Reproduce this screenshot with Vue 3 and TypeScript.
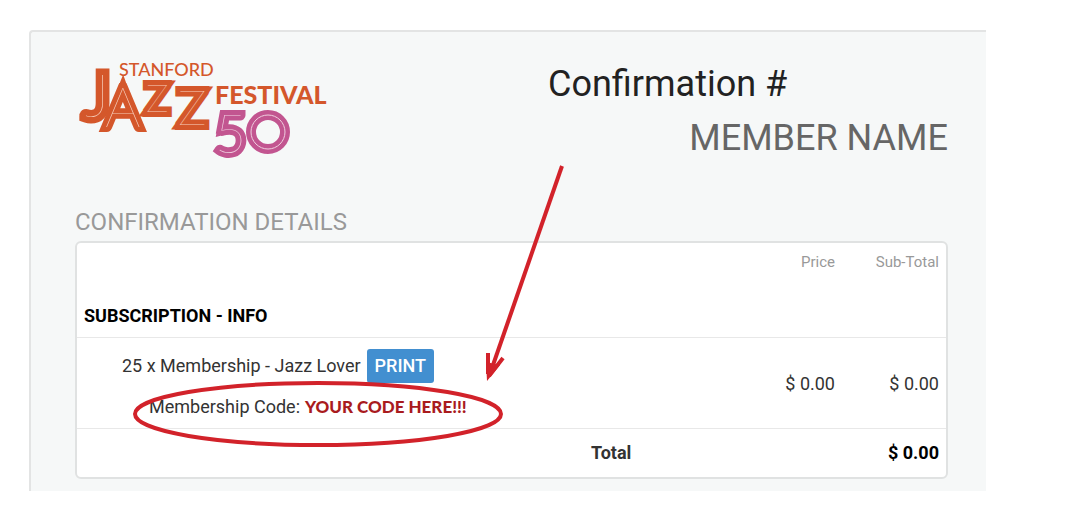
<script setup lang="ts">
interface LineItem {
  quantity: number
  name: string
  code: string
  price: number
}

const items: LineItem[] = [
  { quantity: 25, name: 'Membership - Jazz Lover', code: 'YOUR CODE HERE!!!', price: 0 },
]

const money = (value: number): string => `$ ${value.toFixed(2)}`
const total = items.reduce((sum, item) => sum + item.price, 0)

const printPage = (): void => window.print()
</script>

<template>
  <main class="page">
    <article class="sheet">
      <header class="top">
        <svg class="logo" viewBox="0 0 256 104" role="img" aria-label="Stanford Jazz Festival 50">
          <text class="jazz">
            <tspan class="initial" x="10" y="57">J</tspan>
            <tspan x="30" y="67" font-size="56">A</tspan>
            <tspan x="71" y="52" font-size="38">Z</tspan>
            <tspan x="103" y="65" font-size="48">Z</tspan>
          </text>
          <text class="five" x="140" y="93">5</text>
          <circle class="ring" cx="193" cy="72" r="17" />
          <circle class="ring-line" cx="193" cy="72" r="17" />
          <text class="stanford" x="44" y="16">STANFORD</text>
          <text class="festival" x="140" y="44">FESTIVAL</text>
        </svg>
        <div class="who">
          <h1 class="number">Confirmation #</h1>
          <p class="member">MEMBER NAME</p>
        </div>
      </header>

      <h2 class="heading">CONFIRMATION DETAILS</h2>
      <div class="panel">
        <table class="details">
          <colgroup>
            <col class="col-item" />
            <col />
            <col class="col-price" />
            <col class="col-subtotal" />
          </colgroup>
          <thead>
            <tr class="labels">
              <th></th>
              <th></th>
              <th class="amount" scope="col">Price</th>
              <th class="amount" scope="col">Sub-Total</th>
            </tr>
            <tr class="group">
              <th colspan="4" scope="colgroup">SUBSCRIPTION - INFO</th>
            </tr>
          </thead>
          <tbody>
            <tr v-for="item in items" :key="item.code" class="item">
              <td colspan="2">
                <div class="product">
                  <span>{{ item.quantity }} x {{ item.name }}</span>
                  <button class="print" type="button" @click="printPage">PRINT</button>
                </div>
                <div class="membership">
                  <span>Membership Code:</span>
                  <strong class="code">{{ item.code }}</strong>
                </div>
              </td>
              <td class="amount">{{ money(item.price) }}</td>
              <td class="amount">{{ money(item.price) }}</td>
            </tr>
          </tbody>
          <tfoot>
            <tr class="total">
              <td></td>
              <th scope="row">Total</th>
              <td></td>
              <td class="amount">{{ money(total) }}</td>
            </tr>
          </tfoot>
        </table>
      </div>

      <svg class="callout" width="600" height="460" viewBox="30 30 600 460" aria-hidden="true">
        <ellipse cx="318" cy="414" rx="183" ry="31" />
        <path d="M562 166 L492 368" />
        <path d="M488 353 V374 M503 358 L489 376" />
        <path class="tip" d="M487 381 L486 362 L495 364 L500 365 Z" />
      </svg>
    </article>
  </main>
</template>

<style>
body {
  margin: 0;
  background: #fff;
}
</style>

<style scoped>
.page {
  padding: 30px 97px 28px 29px;
  font-family: Roboto, "Liberation Sans", sans-serif;
  color: #333;
}

.sheet {
  position: relative;
  padding: 28px 38px 12px 44px;
  border-top: 2px solid #e3e4e4;
  border-left: 2px solid #e3e4e4;
  border-top-left-radius: 4px;
  background: #f6f8f8;
}

.top {
  display: flex;
  justify-content: space-between;
  align-items: flex-start;
  height: 144px;
}

.logo {
  width: 256px;
  height: 104px;
  flex: none;
  overflow: visible;
}

/* Hairline letters: the wide stroke makes the body, the fill makes the inner line. */
.jazz,
.five {
  font-family: Lato, sans-serif;
  font-weight: 100;
  paint-order: stroke;
  stroke-width: 10;
}

.jazz {
  fill: #f6cbb8;
  stroke: #d4572b;
}

.initial {
  font-size: 60px;
  stroke-width: 13;
}

.five {
  fill: #f0cfe0;
  stroke: #c25590;
  font-size: 54px;
}

.ring {
  fill: none;
  stroke: #c25590;
  stroke-width: 10;
}

.ring-line {
  fill: none;
  stroke: #f0cfe0;
}

.stanford {
  fill: #d4572b;
  font: 500 18px Lato, sans-serif;
}

.festival {
  fill: #d4572b;
  font: 900 25px Lato, sans-serif;
}

.who {
  width: 400px;
}

.number {
  margin: 0;
  font-size: 36px;
  font-weight: 400;
  line-height: 48px;
  color: #222;
}

.member {
  margin: 6px 0 0;
  font-size: 36px;
  line-height: 48px;
  text-align: right;
  color: #666;
}

.heading {
  margin: 0;
  padding: 4px 0 5px;
  font-size: 24px;
  font-weight: 400;
  line-height: 28px;
  color: #999;
}

.panel {
  border: 2px solid #e0e2e2;
  border-radius: 6px;
  background: #fff;
}

.details {
  width: 100%;
  border-collapse: collapse;
  table-layout: fixed;
  font-size: 18px;
  line-height: 24px;
}

.col-item {
  width: 58%;
}

.col-price {
  width: 88px;
}

.col-subtotal {
  width: 104px;
}

.details th,
.details td {
  padding: 0 7px;
  text-align: left;
}

.details .amount {
  text-align: right;
}

.details .labels th {
  height: 38px;
  font-size: 15px;
  font-weight: 400;
  color: #999;
}

.details .group th {
  height: 56px;
  padding-top: 14px;
  box-sizing: border-box;
  color: #000;
}

.item,
.total {
  border-top: 1px solid #e8e8e8;
}

.details .item td {
  height: 88px;
  padding-top: 2px;
}

.product {
  display: flex;
  align-items: center;
  gap: 6px;
  padding-left: 38px;
}

.print {
  height: 34px;
  padding: 0 8px;
  border: 0;
  border-radius: 3px;
  background: #428fd0;
  color: #fff;
  font: 500 18px Roboto, sans-serif;
}

.membership {
  display: flex;
  align-items: center;
  gap: 5px;
  margin-top: 12px;
  padding-left: 65px;
}

.code {
  color: #a91b1e;
  font: 900 17px/24px Lato, sans-serif;
}

.details .total th,
.details .total td {
  height: 48px;
}

.total th {
  padding-left: 10px;
}

.total .amount {
  color: #000;
  font-weight: 700;
}

.callout {
  position: absolute;
  top: -2px;
  left: -1px;
  fill: none;
  stroke: #d2222a;
  stroke-width: 4;
  pointer-events: none;
}

.callout .tip {
  fill: #d2222a;
  stroke: none;
}
</style>
